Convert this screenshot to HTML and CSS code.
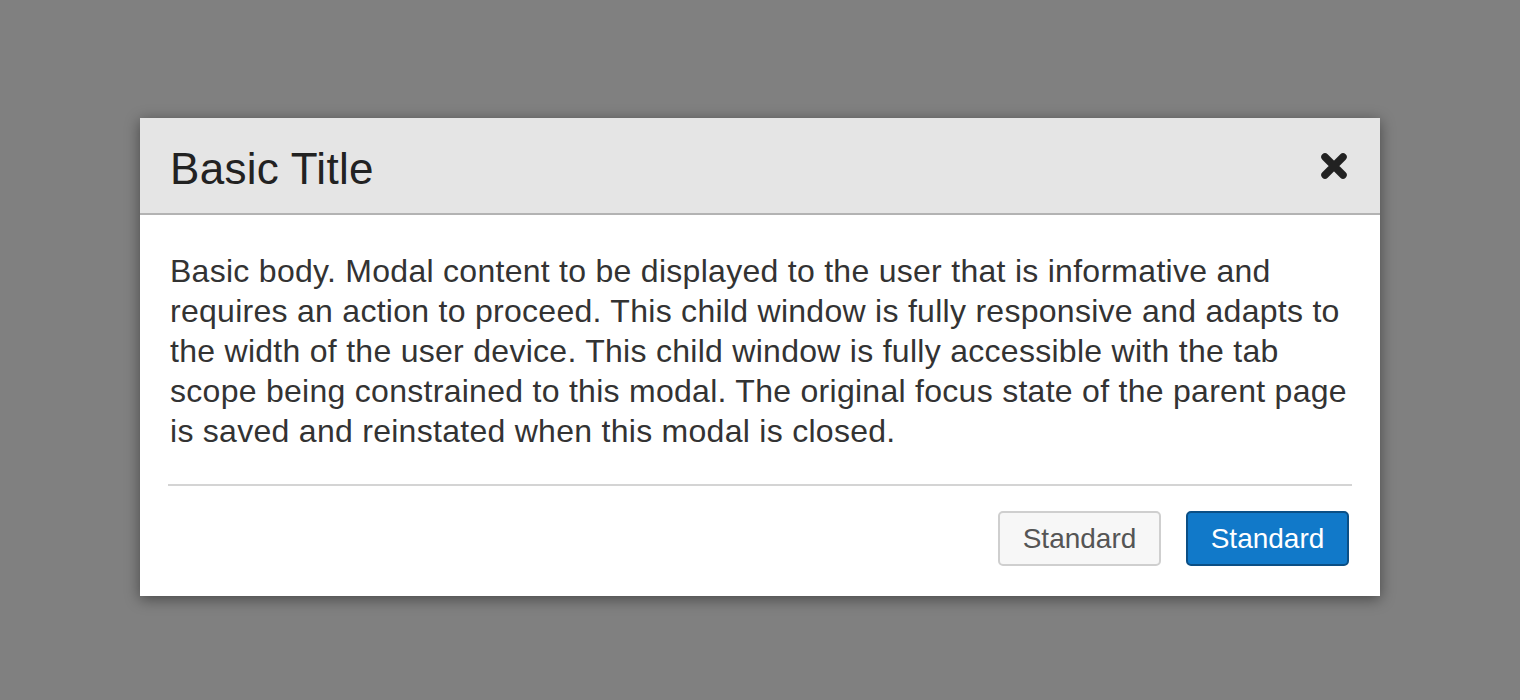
FILE: index.html
```html
<!DOCTYPE html>
<html lang="en">
<head>
<meta charset="utf-8">
<title>Modal</title>
<link rel="stylesheet" href="styles.css">
</head>
<body>
<div class="backdrop">
  <div class="modal" role="dialog" aria-labelledby="modal-title">
    <div class="modal-header">
      <h1 class="modal-title" id="modal-title">Basic Title</h1>
      <button class="close" aria-label="Close">
        <svg viewBox="0 0 30 30" width="30" height="30" aria-hidden="true">
          <path d="M6 6 L24 24 M24 6 L6 24" stroke="#222" stroke-width="7.5" stroke-linecap="round"/>
        </svg>
      </button>
    </div>
    <div class="modal-body">
      <p>Basic body. Modal content to be displayed to the user that is informative and requires an action to proceed. This child window is fully responsive and adapts to the width of the user device. This child window is fully accessible with the tab scope being constrained to this modal. The original focus state of the parent page is saved and reinstated when this modal is closed.</p>
    </div>
    <div class="modal-footer">
      <button class="btn btn-default">Standard</button>
      <button class="btn btn-primary">Standard</button>
    </div>
  </div>
</div>
</body>
</html>
```

FILE: styles.css
```css
html, body {
  margin: 0;
  padding: 0;
  height: 100%;
}
body {
  background: #808080;
  font-family: "Liberation Sans", Arial, Helvetica, sans-serif;
}
.backdrop {
  height: 700px;
  display: flex;
  justify-content: center;
  padding-top: 118px;
  box-sizing: border-box;
}
.modal {
  width: 1240px;
  height: 478px;
  background: #fff;
  box-shadow: 0 3px 14px rgba(0, 0, 0, 0.45);
  display: flex;
  flex-direction: column;
}
.modal-header {
  height: 97px;
  background: #e5e5e5;
  border-bottom: 2px solid #b3b3b3;
  box-sizing: border-box;
  display: flex;
  align-items: center;
  justify-content: space-between;
  padding: 0 31px 0 30px;
}
.modal-title {
  margin: 0;
  font-weight: normal;
  font-size: 44px;
  letter-spacing: 0.3px;
  color: #222;
  line-height: 1;
  padding-top: 6px;
}
.close {
  background: none;
  border: 0;
  padding: 0;
  width: 30px;
  height: 30px;
  display: flex;
}
.modal-body {
  padding: 36px 30px 0 30px;
}
.modal-body p {
  margin: 0;
  font-size: 32px;
  letter-spacing: 0.28px;
  line-height: 40px;
  color: #333;
}
.modal-footer {
  margin: 33px 28px 0 28px;
  border-top: 2px solid #d4d4d4;
  padding: 25px 3px 0 0;
  display: flex;
  justify-content: flex-end;
  gap: 25px;
}
.btn {
  height: 55px;
  width: 163px;
  padding: 0;
  font-family: inherit;
  font-size: 28px;
  border-radius: 5px;
  border: 2px solid;
  box-sizing: border-box;
}
.btn-default {
  background: #f7f7f7;
  border-color: #cfcfcf;
  color: #555;
}
.btn-primary {
  background: #1179c9;
  border-color: #0b4f85;
  color: #fff;
}
```
